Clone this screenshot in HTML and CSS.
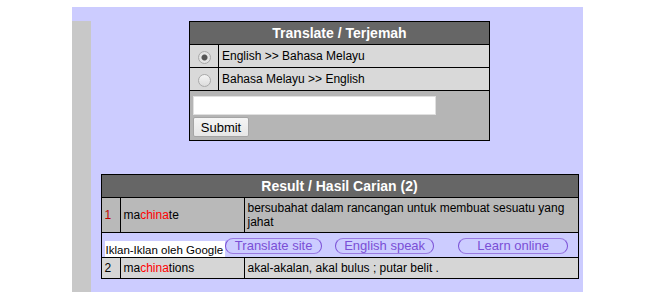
FILE: index.html
```html
<html lang="en">
<head>
    <meta charset="UTF-8">
    <title>Translate / Terjemah</title>
    <link rel="stylesheet" href="styles.css">
</head>
<body>
    <div class="page">
        <div class="side"></div>
        <div class="main">
            <form class="translate">
                <table class="box">
                    <tr>
                        <th colspan="2">Translate / Terjemah</th>
                    </tr>
                    <tr class="opt">
                        <td class="radio-cell"><input type="radio" name="dir" value="en" checked></td>
                        <td>English &gt;&gt; Bahasa Melayu</td>
                    </tr>
                    <tr class="opt">
                        <td class="radio-cell"><input type="radio" name="dir" value="ms"></td>
                        <td>Bahasa Melayu &gt;&gt; English</td>
                    </tr>
                    <tr class="entry">
                        <td colspan="2">
                            <input type="text" class="word" name="word"><br>
                            <button type="submit" class="submit">Submit</button>
                        </td>
                    </tr>
                </table>
            </form>

            <table class="box results">
                <tr>
                    <th colspan="3">Result / Hasil Carian (2)</th>
                </tr>
                <tr class="row-a">
                    <td class="num red">1</td>
                    <td class="word-cell">ma<span class="hit">china</span>te</td>
                    <td>bersubahat dalam rancangan untuk membuat sesuatu yang jahat</td>
                </tr>
                <tr class="ads">
                    <td colspan="3">
                        <div class="ads-line">
                            <span class="ads-label">Iklan-Iklan oleh Google</span>
                            <a class="pill pill-1">Translate site</a>
                            <a class="pill pill-2">English speak</a>
                            <a class="pill pill-3">Learn online</a>
                        </div>
                    </td>
                </tr>
                <tr class="row-b">
                    <td class="num">2</td>
                    <td class="word-cell">ma<span class="hit">china</span>tions</td>
                    <td>akal-akalan, akal bulus ; putar belit .</td>
                </tr>
            </table>
        </div>
    </div>
</body>
</html>
```

FILE: styles.css
```css
html, body {
    margin: 0;
    padding: 0;
}

body {
    background: #ffffff;
    font-family: "Liberation Sans", Arial, sans-serif;
    font-size: 12px;
    color: #000;
}

.page {
    margin: 7px 0 0 72px;
    width: 511px;
    height: 285px;
    padding-top: 14px;
    box-sizing: border-box;
    background: #ccccff;
    display: flex;
    overflow: hidden;
}

.side {
    width: 19px;
    background: #c8c8c8;
}

.main {
    flex: 1;
    padding-left: 5px;
}

.box {
    border-collapse: collapse;
    margin: 0 auto;
    font-family: "Liberation Sans", Arial, sans-serif;
}

.box th {
    background: #666666;
    color: #ffffff;
    font-size: 14px;
    font-weight: bold;
    height: 23px;
    padding: 0;
    border: 1px solid #000;
}

.box td {
    border: 1px solid #000;
    padding: 0 3px;
    font-size: 12px;
}

.translate {
    margin: 0;
}

.translate .box {
    width: 301px;
}

.opt td {
    background: #d9d9d9;
    height: 23px;
}

.radio-cell {
    width: 22px;
    text-align: center;
}

.radio-cell input {
    appearance: none;
    -webkit-appearance: none;
    width: 13px;
    height: 13px;
    margin: 2px 0 0 1px;
    border: 1px solid #a9a9a9;
    border-radius: 50%;
    background: linear-gradient(#f4f4f4, #dcdcdc);
    vertical-align: middle;
}

.radio-cell input:checked {
    background: radial-gradient(circle, #555 0, #555 2.5px, #e6e6e6 3.5px, #dcdcdc 100%);
}

.entry td {
    background: #b5b5b5;
    height: 49px;
    padding: 5px 3px 3px;
    vertical-align: top;
}

.word {
    width: 243px;
    height: 19px;
    border: 1px solid #e0e0e0;
    box-sizing: border-box;
    margin: 0 0 2px 0;
    padding: 0 2px;
}

.submit {
    font-family: "Liberation Sans", Arial, sans-serif;
    font-size: 13px;
    height: 20px;
    width: 56px;
    padding: 0;
    border: 1px solid #a5a5a5;
    border-radius: 2px;
    background: linear-gradient(#f5f5f5, #e6e6e6);
    color: #000;
}

.results {
    width: 478px;
    margin-top: 33px;
}

.results .num {
    width: 12px;
}

.results .red {
    color: #c00000;
}

.results .word-cell {
    width: 117px;
}

.row-a td {
    background: #b9b9b9;
    height: 35px;
}

.row-b td {
    background: #d6d6d6;
    height: 21px;
}

.hit {
    color: #ff0000;
}

.ads td {
    background: transparent;
    height: 24px;
    padding: 0;
}

.ads-line {
    display: flex;
    align-items: flex-end;
    height: 24px;
}

.ads-label {
    background: #ffffff;
    font-size: 11.5px;
    line-height: 15px;
    height: 16px;
    overflow: hidden;
    margin-left: 3px;
    padding: 2px 2px 0 1px;
    box-sizing: border-box;
    white-space: nowrap;
}

.pill {
    color: #7a4fd6;
    font-size: 13px;
    line-height: 14px;
    border: 1.5px solid #7a4fd6;
    border-top-color: #9a7be2;
    border-bottom-color: #9a7be2;
    border-radius: 9px;
    text-align: center;
    margin-bottom: 3px;
    box-sizing: border-box;
    height: 16px;
    white-space: nowrap;
}

.pill-1 {
    width: 97px;
    margin-left: 0;
}

.pill-2 {
    width: 99px;
    margin-left: 13px;
}

.pill-3 {
    width: 110px;
    margin-left: 24px;
}
```
